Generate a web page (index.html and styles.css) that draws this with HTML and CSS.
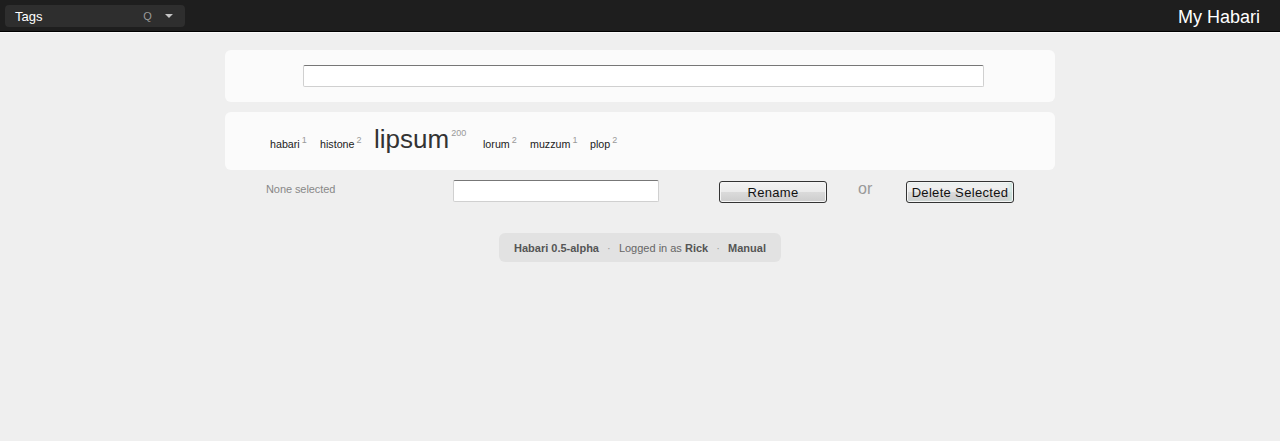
FILE: index.html
```html
<!DOCTYPE html>
<html lang="en">
<head>
<meta charset="utf-8">
<title>My Habari</title>
<link rel="stylesheet" href="styles.css">
</head>
<body>
<header class="menubar">
  <div class="menu"><span class="menu-title">Tags</span><span class="hotkey">Q</span>
    <svg class="arrow" width="8" height="4" viewBox="0 0 8 4"><path d="M0 0h8L4 4z" fill="#c4c4c4"/></svg>
  </div>
  <a class="site">My Habari</a>
</header>
<main class="page">
  <section class="panel search"><input class="field search-field" type="text" aria-label="Search"></section>
  <section class="panel tags">
    <a class="tag">habari<sup>1</sup></a>
    <a class="tag">histone<sup>2</sup></a>
    <a class="tag large">lipsum<sup>200</sup></a>
    <a class="tag">lorum<sup>2</sup></a>
    <a class="tag">muzzum<sup>1</sup></a>
    <a class="tag">plop<sup>2</sup></a>
  </section>
  <section class="controls">
    <span class="selected">None selected</span>
    <input class="field rename-field" type="text" aria-label="New name">
    <button class="button">Rename</button>
    <span class="or">or</span>
    <button class="button delete">Delete Selected</button>
  </section>
</main>
<footer class="footer"><b class="version">Habari 0.5-alpha</b><i class="dot">·</i><span class="login">Logged in as <b>Rick</b></span><i class="dot">·</i><b>Manual</b></footer>
</body>
</html>
```
FILE: styles.css
```css
* { box-sizing: border-box; }
body { margin: 0; background: #efefef; font-family: "Liberation Sans", Arial, sans-serif; font-size: 11px; color: #222; }
.menubar { height: 32px; background: #1e1e1e; border-bottom: 1px solid #000; box-shadow: 0 1px #fafafa; display: flex; justify-content: space-between; padding: 5px 20px 0 5px; }
.menu { width: 180px; height: 22px; border-radius: 4px; background: #2e2e2e; display: flex; align-items: center; padding: 0 12px 0 10px; color: #fff; }
.menu-title { font-size: 13px; width: 128px; line-height: 22px; padding-top: 1px; }
.hotkey { color: #999; font-size: 11px; width: 23px; padding-left: 1px; }
.arrow { display: block; }
.site { color: #fff; font-size: 18px; line-height: 25px; }
.page { width: 830px; margin: 18px auto 0; }
.panel { background: #fbfbfb; border-radius: 6px; }
.search { height: 52px; padding: 15px 0 0 78px; }
.field { display: block; height: 22px; padding: 0 3px; background: #fff; border: 1px solid #d0d0d0; border-top-color: #777; border-radius: 2px; }
.search-field { width: 681px; }
.tags { height: 58px; margin-top: 10px; padding: 11px 0 0 45px; display: grid; grid-template-columns: 50px 54px 109px 47px 60px 40px; align-items: baseline; }
.tag { display: flex; align-items: baseline; white-space: nowrap; font-size: 10.7px; }
.tag sup { font-size: 9px; line-height: 9px; color: #999; margin-left: 2px; position: relative; top: -5px; vertical-align: baseline; }
.tag.large { font-size: 26px; line-height: 32px; color: #333; }
.large sup { top: -12px; }
.controls { height: 42px; margin-top: 10px; padding-left: 41px; display: grid; grid-template-columns: 187px 266px 139px 48px 108px; align-items: start; }
.selected { color: #888; line-height: 19px; letter-spacing: -0.08px; }
.rename-field { width: 206px; }
.button { width: 108px; height: 22px; margin-top: 1px; padding: 0; white-space: nowrap; border: 1px solid #333; border-radius: 3px; background: linear-gradient(#f3f3f3, #ebebeb 48%, #dadada 52%, #cdcdcd); box-shadow: inset 0 0 0 1px #f5f5f5; font: 13px/22px "Liberation Sans", Arial, sans-serif; letter-spacing: 0.33px; color: #111; }
.delete { box-shadow: inset 0 0 0 1px #f5f5f5, inset -3px 0 4px #c9e5df; }
.or { color: #999; font-size: 16px; line-height: 18px; }
.footer { width: 282px; height: 29px; margin: 11px auto 0; padding: 1px 15px 0; display: flex; justify-content: space-between; align-items: center; line-height: 29px; background: #e2e2e2; border-radius: 6px; color: #666; }
.footer b { color: #555; }
.dot { font-style: normal; color: #999; }
```
